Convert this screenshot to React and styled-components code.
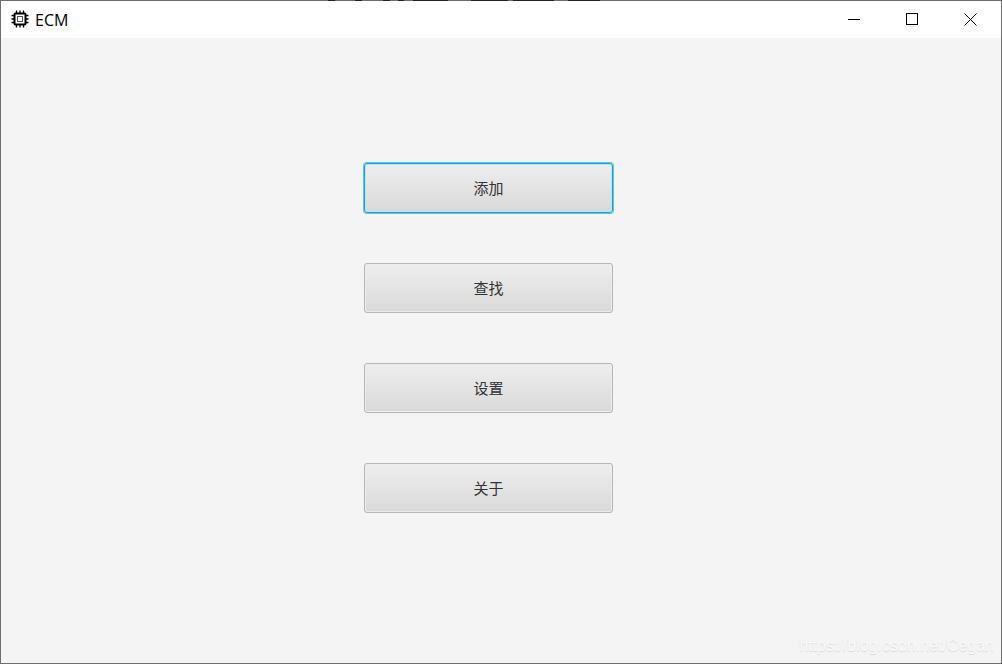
import React from 'react';
import styled, { createGlobalStyle } from 'styled-components';

const GlobalStyle = createGlobalStyle`
  html, body {
    margin: 0;
    padding: 0;
    background: #f4f4f4;
  }
  #root {
    width: 1002px;
    height: 664px;
  }
`;

const Window = styled.div`
  position: relative;
  box-sizing: border-box;
  display: flex;
  flex-direction: column;
  width: 1002px;
  height: 664px;
  border: 1px solid #6e6e6e;
  background: #f4f4f4;
  font-family: "Noto Sans CJK SC", "Liberation Sans", sans-serif;
`;

// bit of the window behind that shows on the top edge of the capture
const TopEdge = styled.div`
  position: absolute;
  top: -1px;
  left: 327px;
  width: 272px;
  height: 1px;
  background: linear-gradient(
    90deg,
    #222 0 7px, #6e6e6e 7px 27px, #222 27px 34px, #6e6e6e 34px 55px,
    #222 55px 62px, #6e6e6e 62px 70px, #222 70px 76px, #6e6e6e 76px 85px,
    #222 85px 120px, #6e6e6e 120px 143px, #222 143px 180px, #6e6e6e 180px 185px,
    #222 185px 226px, #6e6e6e 226px 240px, #222 240px 272px
  );
`;

const TitleBar = styled.div`
  display: flex;
  align-items: center;
  flex: none;
  height: 37px;
  padding-right: 2px;
  background: #fff;
`;

const AppIcon = styled.svg`
  flex: none;
  width: 18px;
  height: 18px;
  margin: 0 0 2px 10px;
`;

const Title = styled.span`
  flex: 1;
  margin-left: 6px;
  font-family: "Open Sans", "Liberation Sans", sans-serif;
  font-size: 16px;
  color: #000;
`;

const WinButton = styled.div`
  box-sizing: border-box;
  display: flex;
  align-items: center;
  justify-content: center;
  width: 58px;
  height: 37px;
  padding-bottom: 1px;
`;

const Content = styled.div`
  flex: 1;
  display: flex;
  flex-direction: column;
  align-items: center;
  gap: 50px;
  padding: 125px 25px 0 0;
`;

const MenuButton = styled.button`
  box-sizing: border-box;
  width: 249px;
  height: 50px;
  padding: 0 0 2px;
  border: 1px solid ${(props) => (props.focused ? '#0ea5de' : '#b6b6b6')};
  border-radius: 3px;
  background: linear-gradient(#eeeeee, #d9d9d9);
  box-shadow: ${(props) =>
    props.focused ? '0 0 0 1px #62c2e8, inset 0 0 0 1px #c4e2ee' : 'inset 0 0 0 1px #ececec'};
  font-family: "Noto Sans CJK SC", sans-serif;
  font-size: 15px;
  color: #333;
`;

const Watermark = styled.span`
  position: absolute;
  right: 7px;
  bottom: 8px;
  font-family: "Liberation Sans", sans-serif;
  font-size: 16px;
  color: #f9f9f9;
  text-shadow: 0 1px 1px #d8d8d8;
`;

const ChipIcon = () => (
  <AppIcon viewBox="0 0 18 18" fill="none" stroke="#000">
    <rect x="3.5" y="3.5" width="11" height="11" rx="1" strokeWidth="2" />
    <rect x="6.5" y="6.5" width="5" height="5" stroke="#555" strokeWidth="1" />
    <path
      d="M5.5 0.5v3M9 0.5v3M12.5 0.5v3M5.5 14.5v3M9 14.5v3M12.5 14.5v3M0.5 5.5h3M0.5 9h3M0.5 12.5h3M14.5 5.5h3M14.5 9h3M14.5 12.5h3"
      strokeWidth="1.3"
    />
  </AppIcon>
);

const items = ['添加', '查找', '设置', '关于'];

export default function App() {
  return (
    <>
      <GlobalStyle />
      <Window>
        <TopEdge />
        <TitleBar>
          <ChipIcon />
          <Title>ECM</Title>
          <WinButton>
            <svg width="12" height="12" viewBox="0 0 12 12" stroke="#000" fill="none">
              <path d="M0 6.5h12" />
            </svg>
          </WinButton>
          <WinButton>
            <svg width="12" height="12" viewBox="0 0 12 12" stroke="#000" fill="none">
              <rect x="0.5" y="0.5" width="11" height="11" />
            </svg>
          </WinButton>
          <WinButton>
            <svg width="13" height="13" viewBox="0 0 13 13" stroke="#000" fill="none">
              <path d="M0.5 0.5l12 12M12.5 0.5l-12 12" />
            </svg>
          </WinButton>
        </TitleBar>
        <Content>
          {items.map((label, i) => (
            <MenuButton key={label} focused={i === 0}>
              {label}
            </MenuButton>
          ))}
        </Content>
        <Watermark>https://blog.csdn.net/Cegan</Watermark>
      </Window>
    </>
  );
}
